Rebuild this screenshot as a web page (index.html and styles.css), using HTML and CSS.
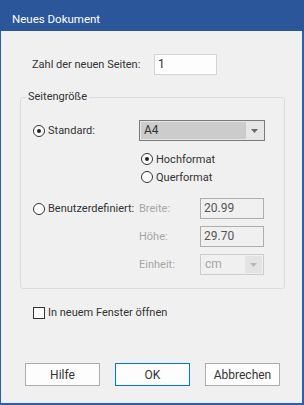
FILE: index.html
```html
<!DOCTYPE html>
<html lang="de">
<head>
<meta charset="utf-8">
<title>Neues Dokument</title>
<link rel="stylesheet" href="styles.css">
</head>
<body>
<div class="window">
  <div class="titlebar">Neues Dokument</div>
  <div class="content">
    <div class="count-row">
      <span class="count-label">Zahl der neuen Seiten:</span>
      <div class="textbox count-box">1</div>
    </div>

    <fieldset class="group">
      <legend class="group-title">Seitengröße</legend>
      <div class="size-grid">
        <label class="opt opt-standard"><span class="radio radio-on"></span>Standard:</label>
        <div class="select">
          <span class="select-value">A4</span>
          <span class="select-btn"><svg width="7" height="4" viewBox="0 0 7 4"><path d="M0 0H7L3.5 4Z" fill="#6a6a6a"/></svg></span>
        </div>
        <label class="opt opt-hoch"><span class="radio radio-on"></span>Hochformat</label>
        <label class="opt opt-quer"><span class="radio"></span>Querformat</label>

        <label class="opt opt-custom"><span class="radio"></span>Benutzerdefiniert:</label>
        <span class="dim-label lbl-breite">Breite:</span>
        <div class="textbox dis-box box-breite">20.99</div>
        <span class="dim-label lbl-hoehe">Höhe:</span>
        <div class="textbox dis-box box-hoehe">29.70</div>
        <span class="dim-label lbl-einheit">Einheit:</span>
        <div class="dis-select box-einheit">
          <span class="dis-select-value">cm</span>
          <span class="dis-select-btn"><svg width="7" height="4" viewBox="0 0 7 4"><path d="M0 0H7L3.5 4Z" fill="#b8b8b8"/></svg></span>
        </div>
      </div>
    </fieldset>

    <label class="check-row"><span class="checkbox"></span>In neuem Fenster öffnen</label>

    <div class="buttons">
      <button class="btn">Hilfe</button>
      <button class="btn btn-default">OK</button>
      <button class="btn">Abbrechen</button>
    </div>
  </div>
</div>
</body>
</html>
```

FILE: styles.css
```css
html, body {
  margin: 0;
  padding: 0;
  background: #f0f0f0;
}
body {
  font-family: Roboto, "Liberation Sans", sans-serif;
  font-size: 11px;
  color: #333;
}
.window {
  width: 304px;
  height: 405px;
  box-sizing: border-box;
  border: 1px solid #2a5fae;
  border-top: 0;
  border-right-width: 2px;
  border-bottom-width: 2px;
  display: flex;
  flex-direction: column;
  background: #f0f0f0;
}
.titlebar {
  height: 31px;
  flex: none;
  box-sizing: border-box;
  background: #2b579a;
  color: #fff;
  font-size: 11.5px;
  padding: 12px 0 0 12px;
  line-height: 14px;
  margin-left: -1px;
  margin-right: -2px;
}
.content {
  flex: 1;
  display: flex;
  flex-direction: column;
  padding: 23px 17px 17px 19px;
}
.count-row {
  display: flex;
  align-items: center;
  padding-left: 12px;
}
.count-label {
  width: 122px;
}
.textbox {
  box-sizing: border-box;
  height: 21px;
  border: 1px solid #d4d4d4;
  background: #fdfdfd;
  padding: 0 3px;
  line-height: 19px;
  font-size: 12px;
  color: #333;
}
.count-box {
  width: 63px;
}
.group {
  margin: 15px 0 0 0;
  padding: 16px 0 13px 12px;
  border: 1px solid #dcdcdc;
  border-radius: 3px;
  min-width: 0;
}
.group-title {
  padding: 0 2px;
  margin-left: -7px;
  line-height: 14px;
}
.size-grid {
  display: grid;
  grid-template-columns: 106px 61px 64px;
  grid-template-rows: 21px 9px 18px 18px 12px 21px 7px 21px 7px 21px;
  align-items: center;
}
.opt {
  display: flex;
  align-items: center;
  gap: 3px;
}
.radio {
  width: 12px;
  height: 12px;
  box-sizing: border-box;
  border: 1px solid #333;
  border-radius: 50%;
  background: #fff;
  display: flex;
  align-items: center;
  justify-content: center;
}
.radio-on::after {
  content: "";
  width: 4px;
  height: 4px;
  border-radius: 50%;
  background: #222;
}
.opt-standard { grid-column: 1; grid-row: 1; }
.select {
  grid-column: 2 / 4;
  grid-row: 1;
  width: 126px;
  height: 21px;
  box-sizing: border-box;
  border: 1px solid #7a7a7a;
  background: #e6e6e6;
  display: flex;
  padding: 1px;
}
.select-value {
  flex: 1;
  background: #cccccc;
  padding-left: 3px;
  line-height: 17px;
  font-size: 12px;
}
.select-btn {
  width: 17px;
  display: flex;
  align-items: center;
  justify-content: center;
}
.opt-hoch { grid-column: 2 / 4; grid-row: 3; padding-left: 2px; }
.opt-quer { grid-column: 2 / 4; grid-row: 4; padding-left: 2px; }
.opt-custom { grid-column: 1; grid-row: 6; }
.dim-label {
  color: #a6a6a6;
  grid-column: 2;
}
.lbl-breite { grid-row: 6; }
.lbl-hoehe { grid-row: 8; }
.lbl-einheit { grid-row: 10; }
.dis-box {
  background: #f0f0f0;
  border-color: #adadad;
  color: #555;
  width: 64px;
  grid-column: 3;
}
.box-breite { grid-row: 6; }
.box-hoehe { grid-row: 8; }
.box-einheit { grid-row: 10; grid-column: 3; }
.dis-select {
  width: 64px;
  height: 21px;
  box-sizing: border-box;
  border: 1px solid #cccccc;
  background: #f0f0f0;
  display: flex;
  padding: 1px;
}
.dis-select-value {
  flex: 1;
  color: #a6a6a6;
  font-size: 12px;
  line-height: 17px;
  padding-left: 3px;
}
.dis-select-btn {
  width: 17px;
  background: #e3e3e3;
  display: flex;
  align-items: center;
  justify-content: center;
}
.check-row {
  display: flex;
  align-items: center;
  gap: 3px;
  margin-top: 17px;
  padding-left: 13px;
  line-height: 14px;
}
.checkbox {
  width: 12px;
  height: 12px;
  box-sizing: border-box;
  border: 1px solid #333;
  background: #fff;
}
.buttons {
  margin-top: auto;
  display: flex;
  gap: 15px;
  padding-left: 5px;
}
.btn {
  width: 75px;
  height: 23px;
  box-sizing: border-box;
  border: 1px solid #adadad;
  background: #fdfdfd;
  font-family: Roboto, "Liberation Sans", sans-serif;
  font-size: 12px;
  color: #333;
  padding: 0;
}
.btn-default {
  border-color: #0078d7;
}
```
